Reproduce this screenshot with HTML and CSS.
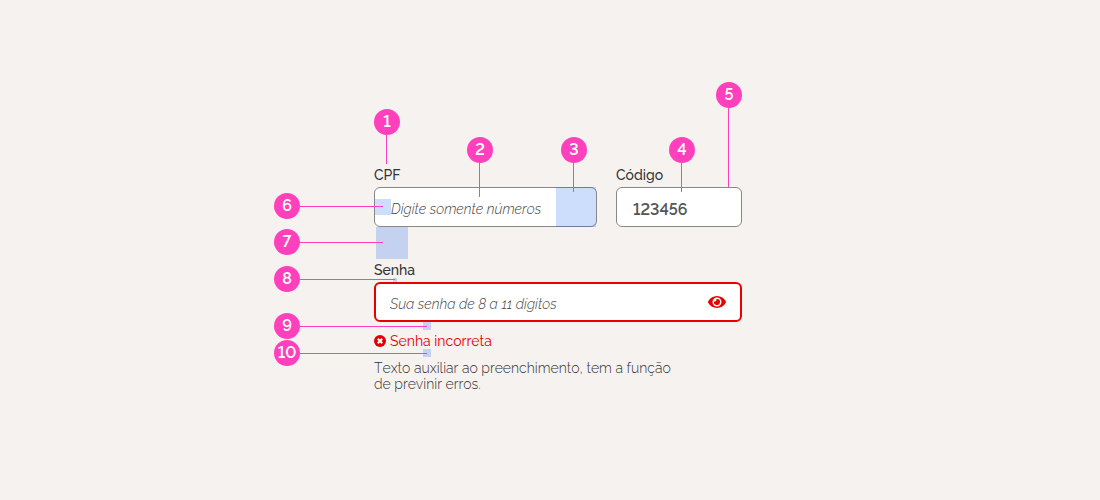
FILE: index.html
```html
<!DOCTYPE html>
<html lang="pt-BR">
<head>
<meta charset="utf-8">
<meta name="viewport" content="width=device-width, initial-scale=1">
<title>Anatomia do input</title>
<link rel="stylesheet" href="styles.css">
</head>
<body>
<main class="stage">
  <form class="form">
    <div class="row">
      <div class="field">
        <label class="label" for="cpf">CPF</label>
        <input class="input" id="cpf" type="text" placeholder="Digite somente números">
      </div>
      <div class="field">
        <label class="label" for="codigo">Código</label>
        <input class="input input-filled" id="codigo" type="text" value="123456">
      </div>
    </div>
    <div class="field">
      <label class="label" for="senha">Senha</label>
      <div class="control">
        <input class="input input-error" id="senha" type="password" placeholder="Sua senha de 8 a 11 dígitos" aria-describedby="erro ajuda">
        <button class="reveal" type="button" aria-label="Mostrar senha">
          <svg viewBox="0 0 18 12" width="18" height="12" aria-hidden="true">
            <path fill="currentColor" fill-rule="evenodd" d="M9 0C5 0 1.800 2.200 .1 5.500a1 1 0 0 0 0 1C1.800 9.800 5 12 9 12s7.200-2.200 8.900-5.500a1 1 0 0 0 0-1C16.200 2.200 13 0 9 0Zm0 1.500a4.500 4.500 0 1 1 0 9 4.500 4.500 0 0 1 0-9Z"/>
            <path fill="currentColor" d="M9 3a3 3 0 1 1-2.900 2.200A1.500 1.500 0 0 0 8.200 3.100 3 3 0 0 1 9 3Z"/>
          </svg>
        </button>
      </div>
      <p class="error" id="erro">
        <svg viewBox="0 0 12 12" width="12" height="12" aria-hidden="true">
          <circle cx="6" cy="6" r="6" fill="currentColor"/>
          <path d="M4.500 4.500l3 3M7.500 4.500l-3 3" stroke="#fff" stroke-width="2" stroke-linecap="square"/>
        </svg>
        Senha incorreta
      </p>
      <p class="help" id="ajuda">Texto auxiliar ao preenchimento, tem a função<br>de previnir erros.</p>
    </div>
  </form>

  <span class="area area-icon"></span>
  <span class="area area-padding"></span>
  <span class="area area-between"></span>
  <span class="area area-label"></span>
  <span class="area area-error"></span>
  <span class="area area-help"></span>

  <span class="pin down pin-1">1</span>
  <span class="pin down pin-2">2</span>
  <span class="pin down pin-3">3</span>
  <span class="pin down pin-4">4</span>
  <span class="pin down pin-5">5</span>
  <span class="pin across pin-6">6</span>
  <span class="pin across pin-7">7</span>
  <span class="pin across pin-8">8</span>
  <span class="pin across pin-9">9</span>
  <span class="pin across pin-10">10</span>
</main>
</body>
</html>
```

FILE: styles.css
```css
* { box-sizing: border-box; }

body {
  margin: 0;
  padding: 167px 16px 64px 34%;
  background: #f6f2ef;
  color: #333;
  font: 14px/16px Raleway, Lato, "Open Sans", sans-serif;
  font-kerning: none;
}

.stage {
  position: relative;
  max-width: 368px;
}

.form {
  display: flex;
  flex-direction: column;
  gap: 35px;
}

.row {
  display: grid;
  grid-template-columns: 223fr 126fr;
  gap: 19px;
}

.field {
  display: flex;
  flex-direction: column;
  min-width: 0;
}

.label {
  margin-bottom: 4px;
  font-weight: 500;
}

.control {
  display: flex;
  align-items: center;
  position: relative;
}

.input {
  width: 100%;
  height: 40px;
  padding: 4px 16px 0;
  border: 1px solid #888;
  border-radius: 6px;
  background: #fff;
  color: #555;
  font: inherit;
  font-kerning: none;
}

.input::placeholder {
  color: #444;
  font-style: italic;
  font-weight: 300;
  opacity: 1;
}

.input-filled {
  font-size: 16px;
  font-weight: 600;
  font-variant-numeric: lining-nums;
}

.input-error {
  padding: 4px 48px 0 14px;
  border: 2px solid #e60000;
}

.reveal {
  position: absolute;
  right: 16px;
  display: flex;
  padding: 0;
  border: 0;
  background: none;
  color: #e60000;
}

.error {
  display: flex;
  align-items: center;
  gap: 4px;
  margin: 11px 0;
  color: #e60000;
}

.help {
  margin: 0;
  font-weight: 300;
}

/* Highlighted spacing areas */
.area {
  position: absolute;
  background: rgba(5, 85, 240, .2);
  pointer-events: none;
}

.area-icon { left: 182px; top: 20px; width: 40px; height: 40px; }
.area-padding { left: 1px; top: 32px; width: 16px; height: 16px; }
.area-between { left: 2px; top: 60px; width: 32px; height: 32px; }
.area-label { left: 19px; top: 111px; width: 4px; height: 4px; }
.area-error { left: 49px; top: 155px; width: 8px; height: 8px; }
.area-help { left: 49px; top: 182px; width: 8px; height: 8px; }

/* Numbered callouts; --reach is the length of the leader line */
.pin {
  position: absolute;
  width: 26px;
  height: 26px;
  border-radius: 50%;
  background: #ff40bc;
  color: #fff;
  font-size: 16px;
  font-weight: 600;
  font-variant-numeric: lining-nums;
  line-height: 26px;
  text-align: center;
  pointer-events: none;
}

.pin::after {
  content: "";
  position: absolute;
  background: #ff40bc;
}

.down::after { left: 12px; top: 26px; width: 1px; height: var(--reach); }
.across { left: -100px; }
.across::after { left: 26px; top: 13px; width: var(--reach); height: 1px; }

.pin-1 { left: 0; top: -58px; --reach: 29px; }
.pin-2 { left: 93px; top: -30px; --reach: 34px; }
.pin-3 { left: 187px; top: -30px; --reach: 29px; }
.pin-4 { left: 295px; top: -30px; --reach: 29px; }
.pin-5 { left: 342px; top: -85px; --reach: 79px; }
.pin-6 { top: 26px; --reach: 83px; }
.pin-7 { top: 62px; --reach: 83px; }
.pin-8 { top: 99px; --reach: 95px; }
.pin-9 { top: 146px; --reach: 127px; }
.pin-10 { top: 173px; --reach: 127px; }
```
